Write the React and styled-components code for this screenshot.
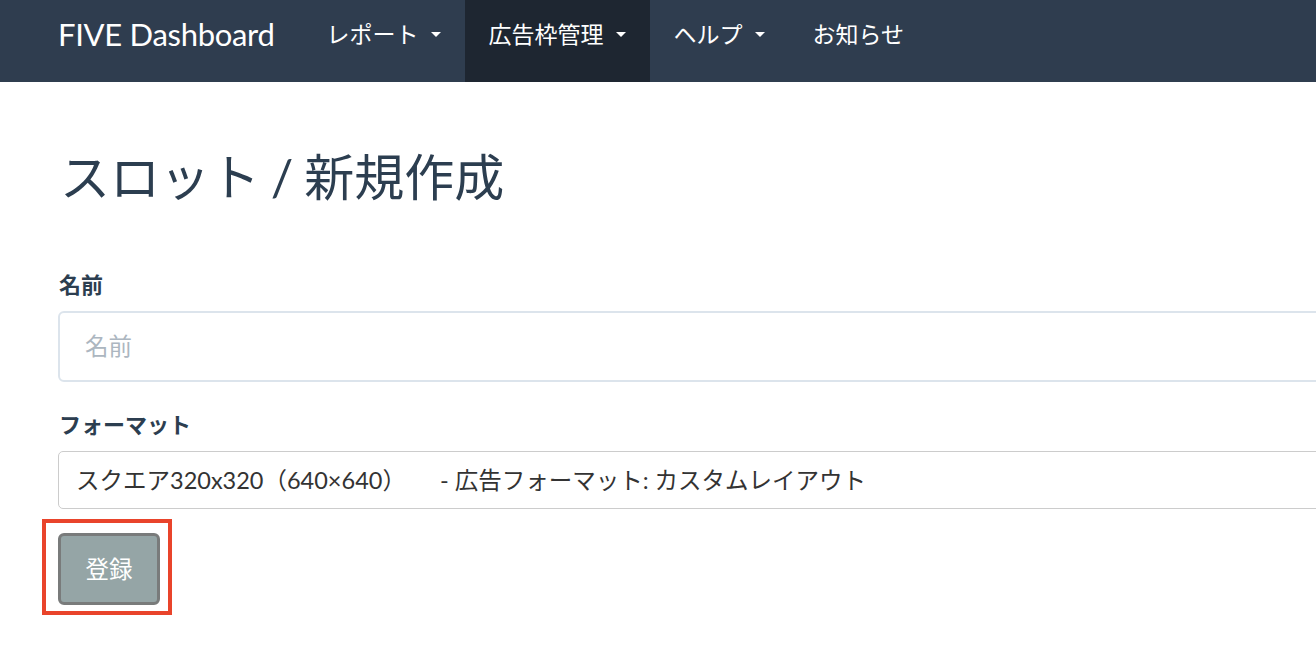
import React from 'react';
import styled, { createGlobalStyle } from 'styled-components';

const GlobalStyle = createGlobalStyle`
  html, body {
    margin: 0;
    padding: 0;
    background: #ffffff;
    overflow: hidden;
  }
  body {
    font-family: Lato, "Noto Sans CJK JP", sans-serif;
    color: #2c3e50;
  }
`;

const NavBar = styled.nav`
  display: flex;
  align-items: stretch;
  height: 82px;
  background-color: #2f3d4f;
  padding-left: 58px;
`;

const Brand = styled.a`
  display: flex;
  align-items: center;
  margin-right: 28px;
  padding-bottom: 14px;
  font-size: 31px;
  color: #ffffff;
  text-decoration: none;
  letter-spacing: -0.3px;
`;

const NavItem = styled.a`
  display: flex;
  align-items: center;
  gap: 12px;
  padding: 0 24px 16px;
  font-size: 23px;
  color: #ffffff;
  text-decoration: none;
  background-color: ${(p) => (p.$active ? '#1e2631' : 'transparent')};
`;

const Caret = styled.span`
  width: 0;
  height: 0;
  margin-top: 3px;
  border-left: 5px solid transparent;
  border-right: 5px solid transparent;
  border-top: 5px solid #ffffff;
`;

const Main = styled.main`
  display: flex;
  flex-direction: column;
  align-items: flex-start;
  padding-left: 58px;
  width: 1320px;
`;

const Title = styled.h1`
  margin: 66px 0 0 2px;
  font-size: 50px;
  font-weight: 400;
  line-height: 58px;
  color: #2c3e50;
  word-spacing: -2px;
`;

const FormGroup = styled.div`
  display: flex;
  flex-direction: column;
  align-self: stretch;
  margin-top: ${(p) => p.$top || 0}px;
`;

const Label = styled.label`
  margin: 0 0 12px 1px;
  font-size: 22px;
  font-weight: 700;
  line-height: 29px;
  color: #2c3e50;
`;

const Input = styled.input`
  box-sizing: border-box;
  height: 71px;
  padding: 0 25px 2px;
  border: 2px solid #dce4ec;
  border-radius: 6px;
  font-family: inherit;
  font-size: 23.5px;
  color: #2c3e50;
  outline: none;

  &::placeholder {
    color: #acb6c0;
  }
`;

const SelectBox = styled.div`
  box-sizing: border-box;
  display: flex;
  align-items: center;
  height: 58px;
  padding: 0 17px 2px;
  border: 1px solid #cccccc;
  border-radius: 5px;
  font-size: 23.5px;
  color: #333333;
  white-space: pre;
`;

const Gap = styled.span`
  display: inline-block;
  width: ${(p) => p.$w}px;
`;

const Highlight = styled.div`
  margin: 10px 0 0 -16px;
  padding: 10px 8px 6px 12px;
  border: 4px solid #e9442b;
`;

const SubmitButton = styled.button`
  box-sizing: border-box;
  width: 102px;
  height: 72px;
  padding: 0 0 2px;
  background-color: #95a5a6;
  border: 3px solid #797b7b;
  border-radius: 6px;
  font-family: inherit;
  font-size: 23.5px;
  color: #ffffff;
  cursor: pointer;
`;

const App = () => {
  return (
    <>
      <GlobalStyle />
      <NavBar>
        <Brand href="#">FIVE Dashboard</Brand>
        <NavItem href="#">
          レポート<Caret />
        </NavItem>
        <NavItem href="#" $active>
          広告枠管理<Caret />
        </NavItem>
        <NavItem href="#">
          ヘルプ<Caret />
        </NavItem>
        <NavItem href="#">お知らせ</NavItem>
      </NavBar>
      <Main>
        <Title>スロット / 新規作成</Title>
        <FormGroup $top={64}>
          <Label>名前</Label>
          <Input type="text" placeholder="名前" />
        </FormGroup>
        <FormGroup $top={28}>
          <Label>フォーマット</Label>
          <SelectBox>
            スクエア320x320（640×640）<Gap $w={34} />- 広告フォーマット: カスタムレイアウト
          </SelectBox>
        </FormGroup>
        <Highlight>
          <SubmitButton>登録</SubmitButton>
        </Highlight>
      </Main>
    </>
  );
};

export default App;
